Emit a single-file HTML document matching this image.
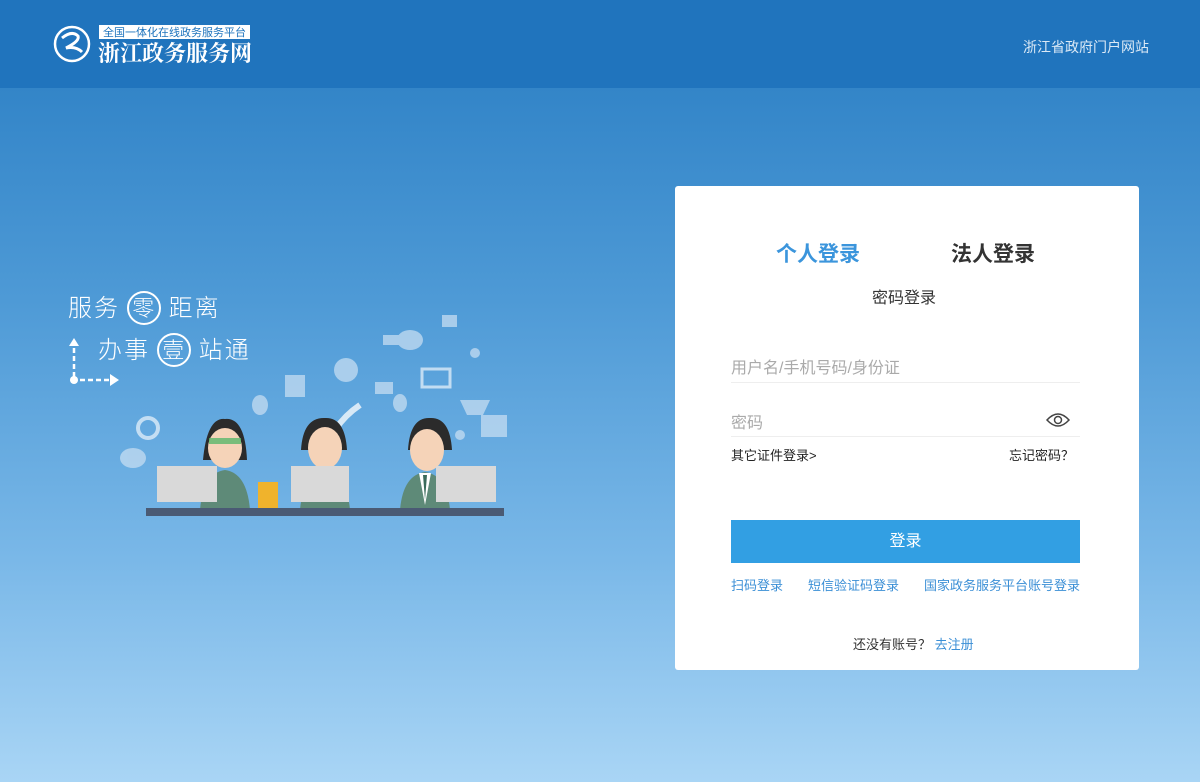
<!DOCTYPE html>
<html><head><meta charset="utf-8"><style>
*{margin:0;padding:0;box-sizing:border-box}
body{width:1200px;height:782px;overflow:hidden;font-family:"Liberation Sans","Noto Sans CJK SC",sans-serif;background:linear-gradient(180deg,#3385c8 88px,#4e9ad6 300px,#7ab8e8 560px,#a9d5f5 782px);position:relative}
.hd{position:absolute;left:0;top:0;width:1200px;height:88px;background:#2074bd}
.card{position:absolute;left:675px;top:186px;width:464px;height:484px;background:#fff;border-radius:3px}
.abs{position:absolute}
</style></head><body>
<div class="hd">
<svg class="abs" style="left:52px;top:24px" width="40" height="40" viewBox="0 0 40 40"><circle cx="20" cy="20" r="17" fill="none" stroke="#fff" stroke-width="2.5"/><path d="M10 14 Q20 6 26 12 Q28 17 14 24 Q24 22 30 28" fill="none" stroke="#fff" stroke-width="3"/></svg>
<div class="abs" style="left:99px;top:25px;width:151px;height:14px;background:#fff;color:#1f74bd;font-size:11px;line-height:14px;text-align:center;font-family:'Noto Sans CJK SC',sans-serif">全国一体化在线政务服务平台</div>
<div class="abs" style="left:98px;top:37px;color:#fff;font-size:22px;font-weight:bold;font-family:'Noto Serif CJK SC',serif;letter-spacing:0px">浙江政务服务网</div>
<div class="abs" style="left:1023px;top:37px;color:#dbe9f6;font-size:14px">浙江省政府门户网站</div>
</div>

<div class="abs" style="left:68px;top:288px;color:#fff;font-size:24px;letter-spacing:2px;font-family:'Noto Sans CJK SC',sans-serif;font-weight:300">服务 <span style="display:inline-block;width:34px;height:34px;border:2px solid #fff;border-radius:50%;text-align:center;line-height:28px;font-size:22px">零</span> 距离</div>
<div class="abs" style="left:98px;top:330px;color:#fff;font-size:24px;letter-spacing:2px;font-family:'Noto Sans CJK SC',sans-serif;font-weight:300">办事 <span style="display:inline-block;width:34px;height:34px;border:2px solid #fff;border-radius:50%;text-align:center;line-height:28px;font-size:22px">壹</span> 站通</div>
<svg class="abs" style="left:66px;top:334px" width="60" height="54"><path d="M8 4 L3 12 L13 12Z" fill="#fff"/><path d="M8 14 V44 M14 46 H46" stroke="#fff" stroke-width="2.5" stroke-dasharray="5 3"/><circle cx="8" cy="46" r="4" fill="#fff"/><path d="M44 40 L53 46 L44 52Z" fill="#fff"/></svg>

<svg class="abs" style="left:115px;top:305px" width="400" height="215">
<g fill="#c5ddf2" opacity=".75">
<ellipse cx="295" cy="35" rx="13" ry="10"/><rect x="268" y="30" width="18" height="10"/><rect x="327" y="10" width="15" height="12"/>
<circle cx="231" cy="65" r="12"/><rect x="170" y="70" width="20" height="22"/><rect x="260" y="77" width="18" height="12"/>
<rect x="307" y="64" width="28" height="18" fill="none" stroke="#e4f0fa" stroke-width="3"/><circle cx="360" cy="48" r="5"/><circle cx="345" cy="130" r="5"/>
<rect x="366" y="110" width="26" height="22"/><path d="M345 95 L375 95 L368 110 L352 110Z"/><ellipse cx="18" cy="153" rx="13" ry="10"/><circle cx="33" cy="123" r="10" fill="none" stroke="#e4f0fa" stroke-width="4"/>
<path d="M220 125 Q230 110 245 100" stroke="#fff" stroke-width="6" fill="none"/><ellipse cx="145" cy="100" rx="8" ry="10"/><ellipse cx="285" cy="98" rx="7" ry="9"/>
</g>
<g>
<path d="M88 155 Q92 112 110 114 Q130 112 132 155Z" fill="#2b2b2b"/><ellipse cx="110" cy="143" rx="17" ry="20" fill="#f5d3b8"/><rect x="94" y="133" width="32" height="6" fill="#5ab86c" opacity=".8"/>
<path d="M85 205 Q88 168 110 165 Q132 168 135 205Z" fill="#5e8a78"/>
<path d="M186 145 Q188 112 210 113 Q230 112 232 145Z" fill="#2b2b2b"/><ellipse cx="210" cy="143" rx="17" ry="21" fill="#f5d3b8"/>
<path d="M185 205 Q188 170 210 167 Q232 170 235 205Z" fill="#5e8a78"/>
<path d="M293 145 Q295 112 315 113 Q335 112 337 145Z" fill="#2b2b2b"/><ellipse cx="312" cy="145" rx="17" ry="21" fill="#f5d3b8"/>
<path d="M285 205 Q288 170 310 167 Q332 170 335 205Z" fill="#5e8a78"/><path d="M304 168 L310 200 L316 168Z" fill="#fff"/><path d="M308 170 L310 195 L312 170Z" fill="#3b6b5c"/>
</g>
<rect x="42" y="161" width="60" height="36" fill="#d9d9d9"/><rect x="176" y="161" width="58" height="36" fill="#d9d9d9"/><rect x="321" y="161" width="60" height="36" fill="#d9d9d9"/>
<rect x="143" y="177" width="20" height="27" fill="#f0b32c"/>
<rect x="31" y="203" width="358" height="8" fill="#4a5a74"/>
</svg>

<div class="card">
<div class="abs" style="left:101px;top:52px;font-size:21px;font-weight:bold;color:#3b95dc">个人登录</div>
<div class="abs" style="left:276px;top:52px;font-size:21px;font-weight:bold;color:#333">法人登录</div>
<div class="abs" style="left:197px;top:98px;font-size:16px;color:#333">密码登录</div>
<div class="abs" style="left:56px;top:168px;font-size:16px;color:#aaa">用户名/手机号码/身份证</div>
<div class="abs" style="left:56px;top:196px;width:349px;height:1px;background:#eee"></div>
<div class="abs" style="left:56px;top:223px;font-size:16px;color:#aaa">密码</div>
<svg class="abs" style="left:371px;top:226px" width="24" height="16"><path d="M1 8 Q12 -4 23 8 Q12 20 1 8Z" fill="none" stroke="#444" stroke-width="1.5"/><circle cx="12" cy="8" r="3.5" fill="none" stroke="#444" stroke-width="1.5"/></svg>
<div class="abs" style="left:56px;top:250px;width:349px;height:1px;background:#eee"></div>
<div class="abs" style="left:56px;top:259px;font-size:13px;color:#222">其它证件登录&gt;</div>
<div class="abs" style="left:334px;top:259px;font-size:13px;color:#222">忘记密码？</div>
<div class="abs" style="left:56px;top:334px;width:349px;height:43px;background:#329fe3;color:#fff;font-size:16px;text-align:center;line-height:43px">登录</div>
<div class="abs" style="left:56px;top:389px;width:349px;font-size:13px;color:#3b8fd6;display:flex;justify-content:space-between"><span>扫码登录</span><span>短信验证码登录</span><span>国家政务服务平台账号登录</span></div>
<div class="abs" style="left:178px;top:448px;font-size:13px;color:#333">还没有账号？ <span style="color:#3b8fd6">去注册</span></div>
</div>
</body></html>
